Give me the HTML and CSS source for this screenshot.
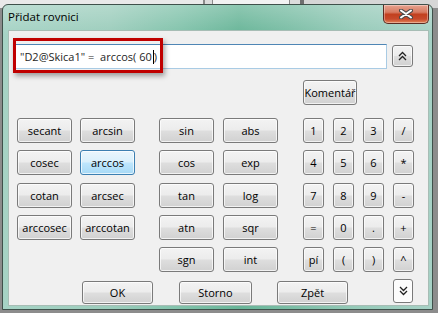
FILE: index.html
```html
<!DOCTYPE html>
<html lang="cs">
<head>
    <meta charset="UTF-8">
    <title>Přidat rovnici</title>
    <link rel="stylesheet" href="styles.css">
</head>
<body>
    <div class="behind">
        <div class="tab">Konfigurace</div>
    </div>
    <div class="window">
        <div class="titlebar">
            <span class="title">Přidat rovnici</span>
            <button class="close" type="button">
                <svg width="14" height="10" viewBox="0 0 14 10">
                    <path d="M2 1.5 L12 8.5 M12 1.5 L2 8.5" stroke="#4a4a4a" stroke-width="4" stroke-linecap="round"/>
                    <path d="M2 1.5 L12 8.5 M12 1.5 L2 8.5" stroke="#fff" stroke-width="2" stroke-linecap="round"/>
                </svg>
            </button>
        </div>
        <div class="content">
            <div class="eqrow">
                <div class="eq">"D2@Skica1" =&nbsp; arccos( 60<span class="caret"></span>)</div>
                <button class="btn arrow" type="button">
                    <svg width="9" height="10" viewBox="0 0 9 10">
                        <polyline points="1,5 4.5,1.5 8,5" fill="none" stroke="#222" stroke-width="1.3"/>
                        <polyline points="1,9 4.5,5.5 8,9" fill="none" stroke="#222" stroke-width="1.3"/>
                    </svg>
                </button>
            </div>
            <div class="notes">
                <button class="btn komentar" type="button">Komentář</button>
            </div>
            <div class="pad">
                <div class="grp trig">
                    <button class="btn">secant</button>
                    <button class="btn">arcsin</button>
                    <button class="btn">cosec</button>
                    <button class="btn active">arccos</button>
                    <button class="btn">cotan</button>
                    <button class="btn">arcsec</button>
                    <button class="btn">arccosec</button>
                    <button class="btn">arccotan</button>
                </div>
                <div class="grp func">
                    <button class="btn">sin</button>
                    <button class="btn">abs</button>
                    <button class="btn">cos</button>
                    <button class="btn">exp</button>
                    <button class="btn">tan</button>
                    <button class="btn">log</button>
                    <button class="btn">atn</button>
                    <button class="btn">sqr</button>
                    <button class="btn">sgn</button>
                    <button class="btn">int</button>
                </div>
                <div class="grp keys">
                    <button class="btn">1</button>
                    <button class="btn">2</button>
                    <button class="btn">3</button>
                    <button class="btn">/</button>
                    <button class="btn">4</button>
                    <button class="btn">5</button>
                    <button class="btn">6</button>
                    <button class="btn">*</button>
                    <button class="btn">7</button>
                    <button class="btn">8</button>
                    <button class="btn">9</button>
                    <button class="btn">-</button>
                    <button class="btn">=</button>
                    <button class="btn">0</button>
                    <button class="btn">.</button>
                    <button class="btn">+</button>
                    <button class="btn">pí</button>
                    <button class="btn">(</button>
                    <button class="btn">)</button>
                    <button class="btn">^</button>
                </div>
            </div>
            <div class="actions">
                <button class="btn wide">OK</button>
                <button class="btn wide storno">Storno</button>
                <button class="btn wide">Zpět</button>
                <button class="btn arrow down" type="button">
                    <svg width="9" height="10" viewBox="0 0 9 10">
                        <polyline points="1,1 4.5,4.5 8,1" fill="none" stroke="#222" stroke-width="1.3"/>
                        <polyline points="1,5 4.5,8.5 8,5" fill="none" stroke="#222" stroke-width="1.3"/>
                    </svg>
                </button>
            </div>
            <div class="mark"></div>
        </div>
    </div>
</body>
</html>
```

FILE: styles.css
```css
body {
    margin: 0;
    width: 438px;
    height: 313px;
    overflow: hidden;
    background: #8c8c8c;
    font-family: "Open Sans", "Noto Sans", sans-serif;
    position: relative;
}
.behind {
    position: absolute;
    left: 0;
    top: 0;
    width: 438px;
    height: 8px;
    background: linear-gradient(to right, #e9e9e9 0, #e9e9e9 203px, #8a8a8a 203px, #8a8a8a 205px, #dcdcdc 205px, #dcdcdc 300px, #6e6e6e 300px, #6e6e6e 304px, #d6d6d6 304px);
}
.tab {
    position: absolute;
    left: 212px;
    top: -1px;
    width: 78px;
    height: 10px;
    border: 1px solid #8a8a8a;
    background: #f2f2f2;
    font-size: 11px;
    line-height: 16px;
    font-weight: bold;
    color: #222;
    padding-left: 6px;
    box-sizing: border-box;
    overflow: hidden;
}
.window {
    position: relative;
    width: 431px;
    height: 306px;
    margin: 4px 0 0 2px;
    border: 1px solid #3f514b;
    border-radius: 6px 6px 0 0;
    padding: 0 3px 3px 5px;
    box-sizing: border-box;
    display: flex;
    flex-direction: column;
    background:
        linear-gradient(to bottom, rgba(255,255,255,0.25), rgba(255,255,255,0) 30px),
        linear-gradient(to right, #a6d3c5 0%, #9ccdbc 25%, #80c2aa 42%, #68b598 55%, #79bda4 66%, #95cab8 82%, #a6d1c5 100%);
}
.titlebar {
    height: 25px;
    display: flex;
    align-items: flex-start;
    justify-content: space-between;
}
.title {
    font-size: 11.5px;
    line-height: 24px;
    color: #000;
}
.close {
    width: 46px;
    height: 19px;
    margin: 0;
    padding: 0;
    border: 1px solid #5b2b22;
    border-top: none;
    border-radius: 0 0 5px 5px;
    background: linear-gradient(to bottom, #e7a28f 0%, #d77b62 40%, #c2401f 52%, #c74a2c 78%, #e28458 100%);
    box-shadow: inset 0 0 0 1px rgba(255,255,255,0.35);
    display: flex;
    align-items: center;
    justify-content: center;
}
.content {
    position: relative;
    flex: 1;
    background: #f0f0f0;
    box-shadow: inset 0 0 0 1px #a7bdb5;
}
.eqrow {
    display: flex;
    align-items: flex-start;
    gap: 5px;
    margin: 14px 0 0 5px;
}
.eq {
    width: 374px;
    height: 25px;
    box-sizing: border-box;
    background: #fff;
    border: 1px solid #a9cbe4;
    border-top-color: #4f86b5;
    padding-left: 6px;
    font-size: 11px;
    line-height: 23px;
    color: #1e1e1e;
    white-space: pre;
}
.caret {
    display: inline-block;
    width: 1px;
    height: 14px;
    background: #000;
    vertical-align: -3px;
    margin-left: 1px;
}
.btn {
    height: 25px;
    margin: 0;
    padding: 0;
    border: 1px solid #7a7a7a;
    border-radius: 3px;
    background: linear-gradient(to bottom, #f3f3f3 0%, #ececec 48%, #dedede 52%, #d1d1d1 100%);
    box-shadow: inset 0 0 0 1px rgba(255,255,255,0.7);
    font-family: "Open Sans", "Noto Sans", sans-serif;
    font-size: 11px;
    color: #000;
    box-sizing: border-box;
}
.btn.active {
    border-color: #3c7fb1;
    background: linear-gradient(to bottom, #eaf6fd 0%, #d9f0fc 48%, #bee6fd 52%, #a7d9f5 100%);
}
.arrow {
    width: 21px;
    height: 22px;
    margin-top: 1px;
    display: flex;
    align-items: center;
    justify-content: center;
}
.notes {
    display: flex;
    margin: 11px 0 0 295px;
}
.komentar {
    width: 54px;
}
.pad {
    display: flex;
    margin: 13px 0 0 9px;
}
.grp {
    display: grid;
    grid-auto-rows: 25px;
    row-gap: 7.25px;
    align-content: start;
}
.trig {
    grid-template-columns: 55px 55px;
    column-gap: 8px;
}
.func {
    grid-template-columns: 55px 55px;
    column-gap: 9px;
    margin-left: 24px;
}
.keys {
    grid-template-columns: 21px 21px 21px 21px;
    column-gap: 9px;
    margin-left: 25px;
}
.actions {
    display: flex;
    align-items: flex-start;
    margin: 9px 0 0 74px;
}
.wide {
    width: 71px;
    height: 23px;
    margin-right: 26px;
}
.storno {
    width: 73px;
    margin-right: 25px;
}
.down {
    width: 20px;
    height: 24px;
    margin: -2px 0 0 19px;
    background: #fcfcfc;
}
.mark {
    position: absolute;
    left: 5px;
    top: 8px;
    width: 150px;
    height: 35px;
    border: 3px solid #c00000;
    box-sizing: border-box;
    box-shadow: 2px 3px 5px rgba(0,0,0,0.35);
}
```
